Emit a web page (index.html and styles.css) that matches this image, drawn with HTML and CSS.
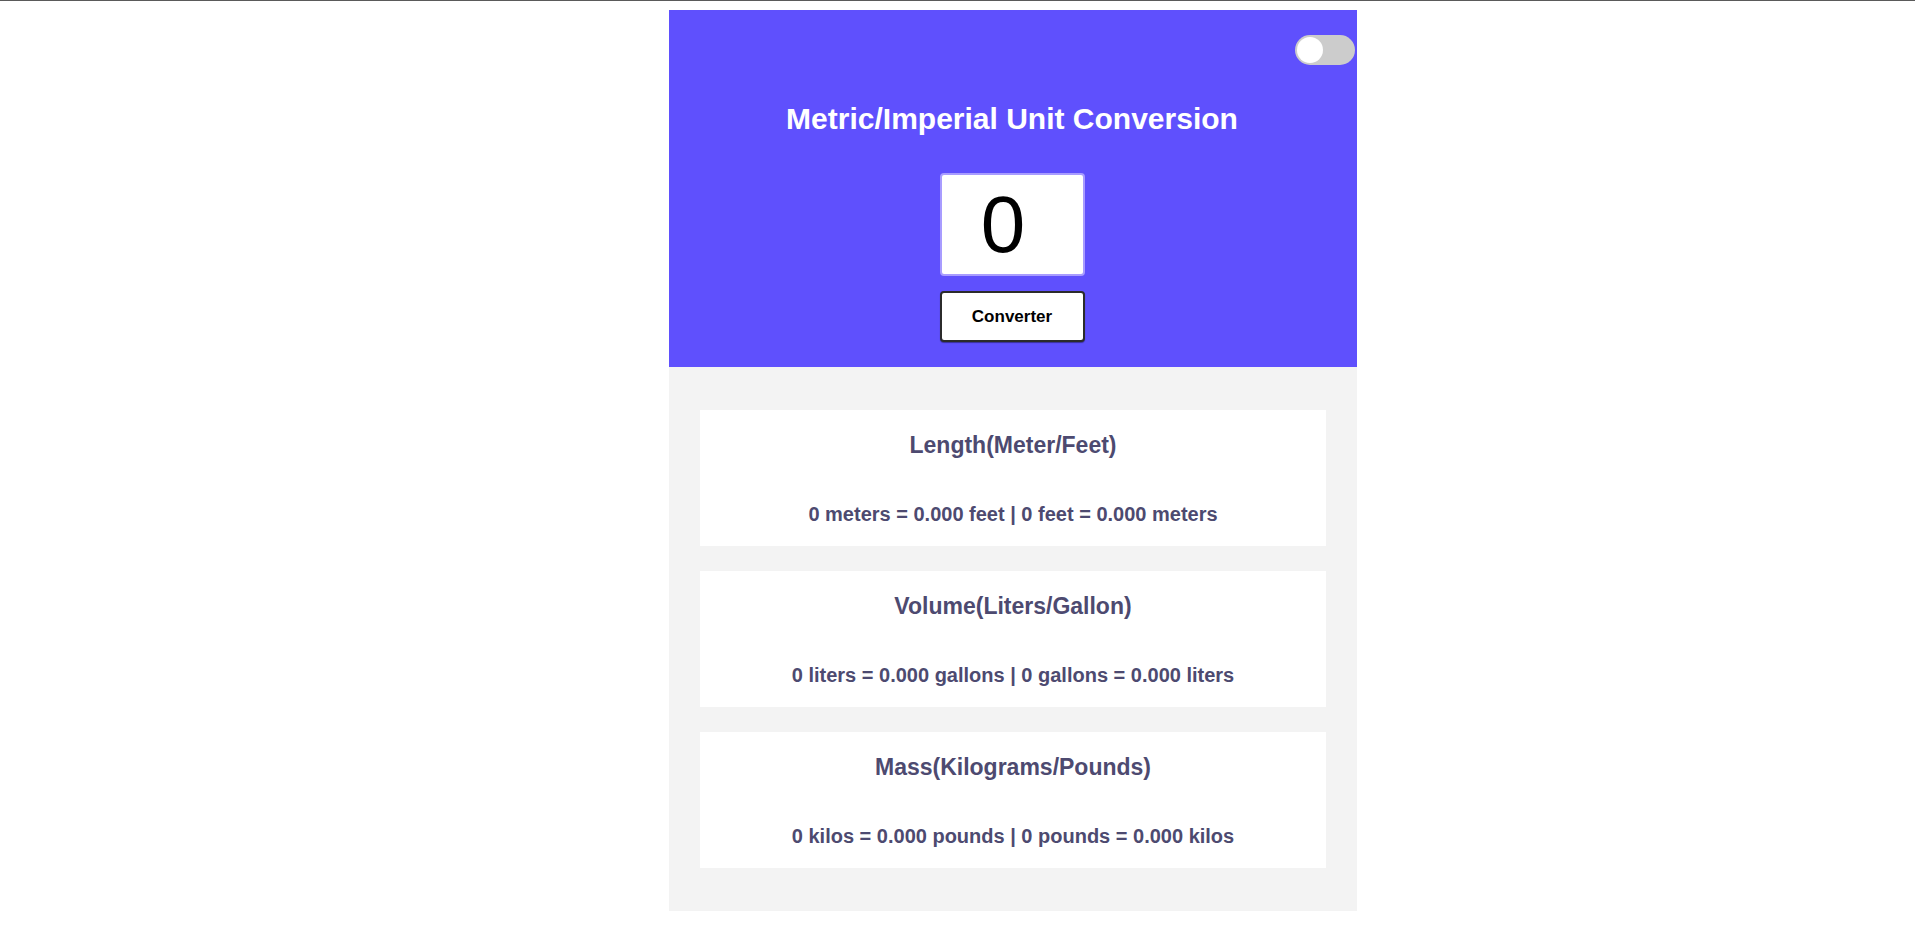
FILE: index.html
```html
<!DOCTYPE html>
<html lang="en">
<head>
<meta charset="UTF-8">
<title>Metric/Imperial Unit Conversion</title>
<link rel="stylesheet" href="styles.css">
</head>
<body>
<main class="app">
  <header class="hero">
    <div class="toggle-row">
      <label class="switch"><span class="knob"></span></label>
    </div>
    <h1 class="title">Metric/Imperial Unit Conversion</h1>
    <input class="amount" type="text" value="0">
    <button class="convert-btn">Converter</button>
  </header>
  <section class="results">
    <div class="card">
      <h2 class="card-title">Length(Meter/Feet)</h2>
      <p class="card-text">0 meters = 0.000 feet | 0 feet = 0.000 meters</p>
    </div>
    <div class="card">
      <h2 class="card-title">Volume(Liters/Gallon)</h2>
      <p class="card-text">0 liters = 0.000 gallons | 0 gallons = 0.000 liters</p>
    </div>
    <div class="card">
      <h2 class="card-title">Mass(Kilograms/Pounds)</h2>
      <p class="card-text">0 kilos = 0.000 pounds | 0 pounds = 0.000 kilos</p>
    </div>
  </section>
</main>
</body>
</html>
```

FILE: styles.css
```css
html {
  border-top: 1px solid #5a5a5a;
  background: #ffffff;
}
body {
  margin: 9px 0 0 0;
  font-family: "Liberation Sans", Arial, sans-serif;
}
.app {
  width: 688px;
  margin-left: 669px;
  display: flex;
  flex-direction: column;
}
.hero {
  background: #5f50fd;
  display: flex;
  flex-direction: column;
  align-items: center;
  padding: 25px 2px 25px 0;
}
.toggle-row {
  align-self: stretch;
  display: flex;
  justify-content: flex-end;
}
.switch {
  width: 60px;
  height: 30px;
  border-radius: 15px;
  background: #cccccc;
  display: flex;
  align-items: center;
  padding: 0 2px;
  box-sizing: border-box;
}
.knob {
  width: 26px;
  height: 26px;
  border-radius: 50%;
  background: #ffffff;
}
.title {
  margin: 37px 0 0 0;
  color: #ffffff;
  font-size: 30px;
  font-weight: 700;
  line-height: 34px;
}
.amount {
  margin-top: 37px;
  width: 145px;
  height: 103px;
  box-sizing: border-box;
  border: 2px solid #a89cff;
  border-radius: 4px;
  background: #ffffff;
  font-family: "Liberation Sans", Arial, sans-serif;
  font-size: 80px;
  text-align: center;
  color: #000000;
  padding: 0 18px 0 0;
  outline: none;
}
.convert-btn {
  margin-top: 15px;
  width: 145px;
  height: 51px;
  box-sizing: border-box;
  border: 2px solid #2b2b2b;
  border-radius: 4px;
  background: #ffffff;
  font-family: "Liberation Sans", Arial, sans-serif;
  font-size: 17px;
  font-weight: 700;
  color: #000000;
  box-shadow: 0 1px 1px rgba(0,0,0,0.4);
}
.results {
  background: #f3f3f3;
  padding: 43px 31px 43px 31px;
  display: flex;
  flex-direction: column;
  gap: 25px;
}
.card {
  background: #ffffff;
  height: 136px;
  display: flex;
  flex-direction: column;
  align-items: center;
  padding-top: 20px;
  box-sizing: border-box;
}
.card-title {
  margin: 0;
  font-size: 23px;
  font-weight: 700;
  color: #4d4a70;
  line-height: 30px;
}
.card-text {
  margin: 43px 0 0 0;
  font-size: 20px;
  font-weight: 700;
  color: #4d4a70;
  line-height: 22px;
}
```
